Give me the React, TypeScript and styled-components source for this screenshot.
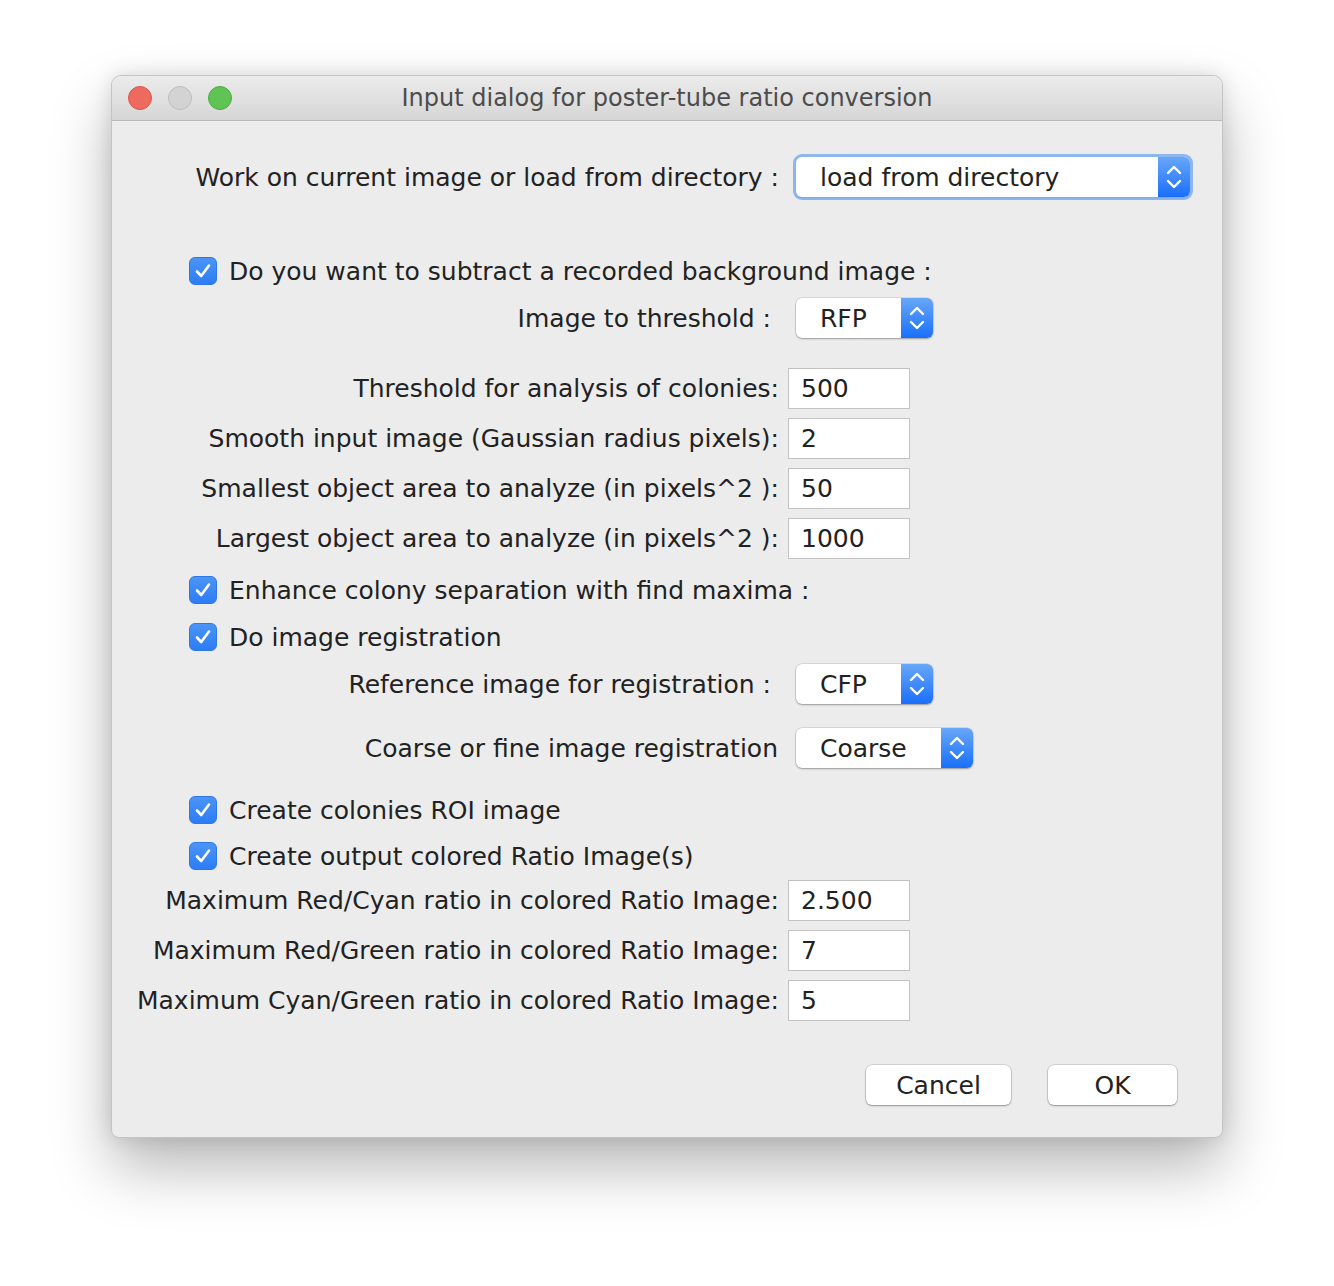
import React from "react";
import styled, { createGlobalStyle, css } from "styled-components";

const Global = createGlobalStyle`
  html, body { margin: 0; padding: 0; background: #ffffff; }
  body { font-family: "DejaVu Sans", "Noto Sans", sans-serif; }
  * { box-sizing: border-box; }
`;

const Page = styled.div`
  width: 1334px;
  height: 1286px;
  padding: 75px 0 0 111px;
  background: #ffffff;
`;

const Window = styled.div`
  width: 1112px;
  height: 1063px;
  border-radius: 10px 10px 8px 8px;
  background: #ececec;
  border: 1px solid #c4c4c4;
  box-shadow: 0 30px 60px rgba(0, 0, 0, 0.28), 0 0 20px rgba(0, 0, 0, 0.12);
  display: flex;
  flex-direction: column;
  overflow: hidden;
`;

const TitleBar = styled.div`
  height: 45px;
  flex: none;
  display: flex;
  align-items: center;
  position: relative;
  background: linear-gradient(#ececec, #d6d6d6);
  border-bottom: 1px solid #b9b9b9;
`;

const Lights = styled.div`
  display: flex;
  gap: 16px;
  padding-left: 16px;
`;

const Light = styled.span<{ $c: string; $b: string }>`
  width: 24px;
  height: 24px;
  border-radius: 50%;
  background: ${(p) => p.$c};
  border: 1px solid ${(p) => p.$b};
`;

const Title = styled.div`
  position: absolute;
  left: 0;
  right: 0;
  text-align: center;
  font-size: 24px;
  color: #4c4c4c;
  pointer-events: none;
`;

const Content = styled.div`
  flex: 1;
  display: flex;
  flex-direction: column;
  padding-top: 36px;
  color: #222222;
  font-size: 25px;
`;

const Row = styled.div<{ $mt: number }>`
  display: grid;
  grid-template-columns: 667px 1fr;
  align-items: center;
  height: 40px;
  margin-top: ${(p) => p.$mt}px;
`;

const Label = styled.div<{ $pr?: number }>`
  text-align: right;
  white-space: nowrap;
  padding-right: ${(p) => p.$pr ?? 0}px;
`;

const CheckRow = styled.div<{ $mt: number }>`
  display: flex;
  align-items: center;
  gap: 12px;
  height: 40px;
  padding-left: 77px;
  margin-top: ${(p) => p.$mt}px;
  white-space: nowrap;
`;

const Box = styled.span`
  width: 28px;
  height: 28px;
  border-radius: 6px;
  background: linear-gradient(#4b95f7, #2c7cf5);
  border: 1px solid #2f78e3;
  display: flex;
  align-items: center;
  justify-content: center;
  flex: none;
`;

const Field = styled.div`
  margin-left: 9px;
  width: 122px;
  height: 41px;
  background: #ffffff;
  border: 1px solid #c3c3c3;
  display: flex;
  align-items: center;
  padding-left: 12px;
`;

const Combo = styled.div<{ $w: number; $focus?: boolean }>`
  margin-left: 17px;
  width: ${(p) => p.$w}px;
  height: 40px;
  background: #ffffff;
  border-radius: 6px;
  display: flex;
  align-items: stretch;
  overflow: hidden;
  box-shadow: 0 1px 2px rgba(0, 0, 0, 0.3), 0 0 0 0.5px rgba(0, 0, 0, 0.15);
  ${(p) =>
    p.$focus &&
    css`
      box-shadow: 0 0 0 3px rgba(110, 165, 240, 0.75), 0 1px 2px rgba(0, 0, 0, 0.3);
    `}
`;

const ComboText = styled.div`
  flex: 1;
  display: flex;
  align-items: center;
  padding-left: 24px;
  white-space: nowrap;
`;

const Arrow = styled.div`
  width: 32px;
  flex: none;
  background: linear-gradient(#68a7f8, #1a6ffb);
  display: flex;
  align-items: center;
  justify-content: center;
`;

const Buttons = styled.div`
  display: flex;
  justify-content: flex-end;
  gap: 37px;
  margin-top: 45px;
  padding-right: 45px;
`;

const Button = styled.button<{ $w: number }>`
  width: ${(p) => p.$w}px;
  height: 40px;
  font: inherit;
  font-size: 25px;
  color: #222222;
  background: #ffffff;
  border: none;
  border-radius: 6px;
  box-shadow: 0 1px 2px rgba(0, 0, 0, 0.3), 0 0 0 0.5px rgba(0, 0, 0, 0.2);
`;

const Check = () => (
  <Box>
    <svg width="20" height="20" viewBox="0 0 20 20">
      <path d="M4 10.5 L8.2 15 L16 4.5" fill="none" stroke="#fff" strokeWidth="2.6" strokeLinecap="round" strokeLinejoin="round" />
    </svg>
  </Box>
);

const Chevrons = () => (
  <svg width="18" height="28" viewBox="0 0 18 28">
    <path d="M3 10 L9 4 L15 10 M3 18 L9 24 L15 18" fill="none" stroke="#fff" strokeWidth="2.4" strokeLinecap="round" strokeLinejoin="round" />
  </svg>
);

type Item =
  | { t: "field"; label: string; value: string; mt: number }
  | { t: "combo"; label: string; value: string; w: number; mt: number; pr: number; focus?: boolean }
  | { t: "check"; label: string; mt: number };

const items: Item[] = [
  { t: "combo", label: "Work on current image or load from directory :", value: "load from directory", w: 394, mt: 0, pr: 0, focus: true },
  { t: "check", label: "Do you want to subtract a recorded background image :", mt: 54 },
  { t: "combo", label: "Image to threshold :", value: "RFP", w: 137, mt: 7, pr: 8 },
  { t: "field", label: "Threshold for analysis of colonies:", value: "500", mt: 30 },
  { t: "field", label: "Smooth input image (Gaussian radius pixels):", value: "2", mt: 10 },
  { t: "field", label: "Smallest object area to analyze (in pixels^2 ):", value: "50", mt: 10 },
  { t: "field", label: "Largest object area to analyze (in pixels^2 ):", value: "1000", mt: 10 },
  { t: "check", label: "Enhance colony separation with find maxima :", mt: 12 },
  { t: "check", label: "Do image registration", mt: 7 },
  { t: "combo", label: "Reference image for registration :", value: "CFP", w: 137, mt: 7, pr: 8 },
  { t: "combo", label: "Coarse or fine image registration", value: "Coarse", w: 177, mt: 24, pr: 1 },
  { t: "check", label: "Create colonies ROI image", mt: 22 },
  { t: "check", label: "Create output colored Ratio Image(s)", mt: 6 },
  { t: "field", label: "Maximum Red/Cyan ratio in colored Ratio Image:", value: "2.500", mt: 4 },
  { t: "field", label: "Maximum Red/Green ratio in colored Ratio Image:", value: "7", mt: 10 },
  { t: "field", label: "Maximum Cyan/Green ratio in colored Ratio Image:", value: "5", mt: 10 },
];

export default function App() {
  return (
    <Page>
      <Global />
      <Window>
        <TitleBar>
          <Lights>
            <Light $c="#ee6a5f" $b="#d8574b" />
            <Light $c="#d3d3d3" $b="#bcbcbc" />
            <Light $c="#5fc454" $b="#4eaa42" />
          </Lights>
          <Title>Input dialog for poster-tube ratio conversion</Title>
        </TitleBar>
        <Content>
          {items.map((it, i) => {
            if (it.t === "check")
              return (
                <CheckRow key={i} $mt={it.mt}>
                  <Check />
                  <span>{it.label}</span>
                </CheckRow>
              );
            if (it.t === "field")
              return (
                <Row key={i} $mt={it.mt}>
                  <Label>{it.label}</Label>
                  <Field>{it.value}</Field>
                </Row>
              );
            return (
              <Row key={i} $mt={it.mt}>
                <Label $pr={it.pr}>{it.label}</Label>
                <Combo $w={it.w} $focus={it.focus}>
                  <ComboText>{it.value}</ComboText>
                  <Arrow>
                    <Chevrons />
                  </Arrow>
                </Combo>
              </Row>
            );
          })}
          <Buttons>
            <Button $w={145}>Cancel</Button>
            <Button $w={129}>OK</Button>
          </Buttons>
        </Content>
      </Window>
    </Page>
  );
}
